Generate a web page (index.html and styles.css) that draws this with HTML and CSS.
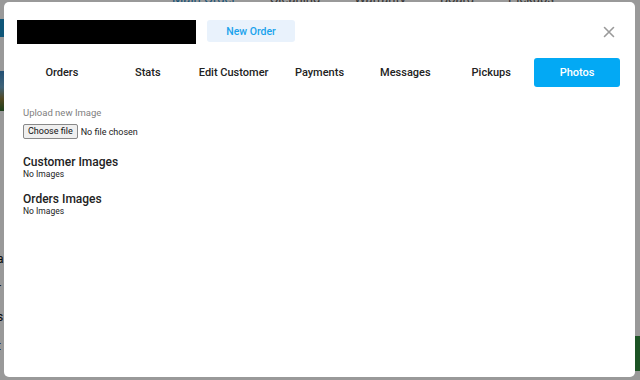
FILE: index.html
```html
<!DOCTYPE html>
<html lang="en">
<head>
  <meta charset="UTF-8" />
  <meta name="viewport" content="width=device-width, initial-scale=1.0" />
  <title>Customer Photos</title>
  <link rel="stylesheet" href="styles.css">
</head>
<body>

<!-- Page behind the modal -->
<div class="page">
  <div class="top-nav">
    <span class="nav-link active">Main Order</span>
    <span class="nav-link">Cleaning</span>
    <span class="nav-link">Warranty</span>
    <span class="nav-link">Board</span>
    <span class="nav-link">Pickups</span>
  </div>
  <div class="side-bar"></div>
  <div class="side-thumb"></div>
  <div class="side-letters">
    <span>a</span>
    <span>r</span>
    <span>s</span>
    <span>t</span>
  </div>
  <div class="side-green"></div>
</div>

<div class="backdrop"></div>

<!-- Customer modal -->
<div class="modal">
  <div class="modal-header">
    <div class="customer-name"></div>
    <button class="new-order">New Order</button>
    <button class="close-btn" aria-label="Close">
      <svg width="12" height="12" viewBox="0 0 12 12">
        <path d="M1.5 1.5 L10.5 10.5 M10.5 1.5 L1.5 10.5" stroke="#9a9a9a" stroke-width="1.6" stroke-linecap="round" />
      </svg>
    </button>
  </div>

  <div class="tabs">
    <div class="tab">Orders</div>
    <div class="tab">Stats</div>
    <div class="tab">Edit Customer</div>
    <div class="tab">Payments</div>
    <div class="tab">Messages</div>
    <div class="tab">Pickups</div>
    <div class="tab active">Photos</div>
  </div>

  <div class="tab-content">
    <label class="upload-label">Upload new Image</label>
    <div class="file-row">
      <span class="file-btn">Choose file</span>
      <span class="file-name">No file chosen</span>
    </div>

    <h3 class="section-title">Customer Images</h3>
    <p class="empty">No Images</p>

    <h3 class="section-title">Orders Images</h3>
    <p class="empty">No Images</p>
  </div>
</div>

</body>
</html>
```

FILE: styles.css
```css
body {
  margin: 0;
  font-family: Roboto, "Liberation Sans", Arial, sans-serif;
  background: #fff;
  width: 640px;
  height: 380px;
  overflow: hidden;
}

.page {
  position: relative;
  width: 640px;
  height: 380px;
}

.top-nav {
  display: flex;
  gap: 34px;
  padding-left: 172px;
  margin-top: -9px;
  font-size: 13px;
}

.nav-link {
  color: #555;
}

.nav-link.active {
  color: #1e88c8;
  text-decoration: underline;
}

.side-bar {
  position: absolute;
  left: 0;
  top: 28px;
  width: 6px;
  height: 18px;
  background: #1a8fc9;
}

.side-thumb {
  position: absolute;
  left: 0;
  top: 80px;
  width: 6px;
  height: 40px;
  background: linear-gradient(#3b86c1, #6aa5c8 40%, #8a7a3a 70%, #2f6b2f);
}

.side-letters {
  position: absolute;
  left: -3px;
  top: 260px;
  display: flex;
  flex-direction: column;
  gap: 13px;
  font-size: 12px;
  line-height: 16px;
  color: #111;
}

.side-green {
  position: absolute;
  right: 0;
  top: 345px;
  width: 6px;
  height: 35px;
  background: #2f8a3c;
}

.backdrop {
  position: fixed;
  inset: 0;
  background: rgba(0, 0, 0, 0.4);
}

.modal {
  position: fixed;
  left: 4px;
  top: 2px;
  right: 5px;
  bottom: 3px;
  background: #fff;
  border-radius: 5px;
  box-sizing: border-box;
  padding: 18px 15px 0 13px;
}

.modal-header {
  display: flex;
  align-items: flex-start;
}

.customer-name {
  width: 179px;
  height: 24px;
  background: #000;
}

.new-order {
  margin-left: 11px;
  width: 88px;
  height: 22px;
  border: none;
  border-radius: 3px;
  background: #e9f2fc;
  color: #1aa3ec;
  font-family: inherit;
  font-size: 10.5px;
  font-weight: 500;
}

.close-btn {
  margin-left: auto;
  margin-top: 6px;
  margin-right: 5px;
  border: none;
  background: none;
  padding: 0;
  width: 12px;
  height: 12px;
}

.tabs {
  display: grid;
  grid-template-columns: repeat(7, 1fr);
  margin: 14px 0 0 2px;
}

.tab {
  height: 29px;
  line-height: 30px;
  text-align: center;
  font-size: 11px;
  font-weight: 500;
  color: #222;
  border-radius: 3px;
}

.tab.active {
  background: #03a9f4;
  color: #fff;
}

.tab-content {
  padding: 20px 0 0 6px;
}

.upload-label {
  display: block;
  font-size: 9.5px;
  color: #808080;
}

.file-row {
  display: flex;
  align-items: center;
  gap: 3px;
  margin: 6px 0 17px;
  font-size: 9px;
}

.file-btn {
  border: 1px solid #888;
  border-radius: 2px;
  background: #efefef;
  padding: 1px 4px;
  line-height: 11px;
  color: #111;
}

.file-name {
  color: #222;
}

.section-title {
  margin: 0;
  font-size: 12px;
  font-weight: 500;
  color: #222;
  line-height: 13px;
}

.empty {
  margin: 0 0 14px;
  font-size: 8.5px;
  color: #222;
}
```
